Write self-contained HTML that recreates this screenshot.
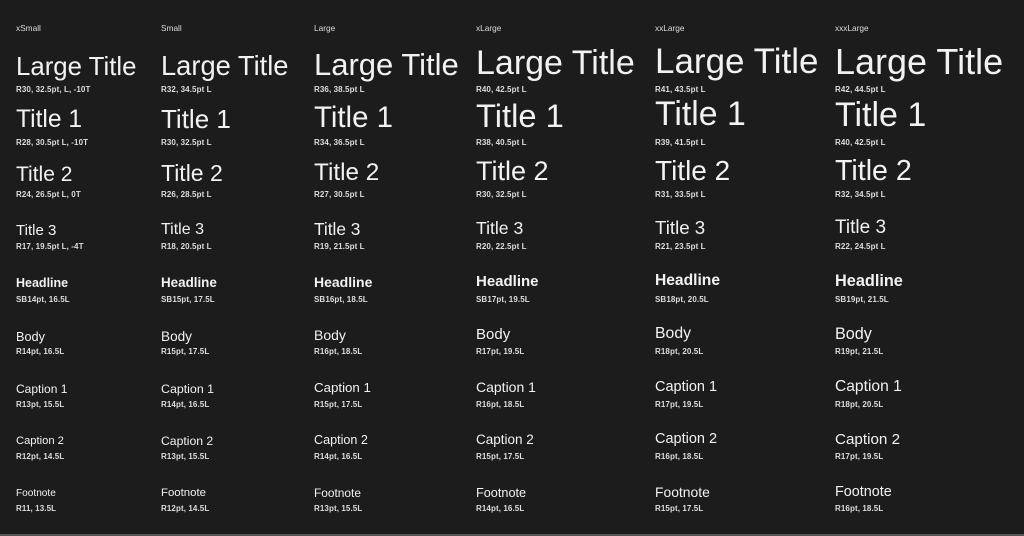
<!DOCTYPE html>
<html><head><meta charset="utf-8"><style>
html,body{margin:0;padding:0}
body{width:1024px;height:536px;background:#1c1c1c;position:relative;overflow:hidden;font-family:"Liberation Sans",sans-serif;color:#f2f2f2}
.c{position:absolute;top:0;height:536px;width:170px}
.c div{position:absolute;left:0;line-height:1;white-space:nowrap}
.h{font-size:8.3px;color:#ddd;top:24px}
.l{font-size:8px;font-weight:bold;color:#ddd;letter-spacing:0.1px;margin-top:1px}
.b{font-weight:bold}
.bot{position:absolute;left:0;right:0;bottom:0;height:2px;background:#555}
</style></head><body>

<div class="c" style="left:16px">
<div class="h">xSmall</div>
<div style="font-size:25.8px;top:55px">Large Title</div><div class="l" style="top:85px">R30, 32.5pt, L, -10T</div>
<div style="font-size:24.6px;top:108px">Title 1</div><div class="l" style="top:138px">R28, 30.5pt L, -10T</div>
<div style="font-size:21px;top:164px">Title 2</div><div class="l" style="top:190px">R24, 26.5pt L, 0T</div>
<div style="font-size:15px;top:223px">Title 3</div><div class="l" style="top:242px">R17, 19.5pt L, -4T</div>
<div class="b" style="font-size:12.5px;top:277px">Headline</div><div class="l" style="top:295px">SB14pt, 16.5L</div>
<div style="font-size:12.7px;top:331px">Body</div><div class="l" style="top:347px">R14pt, 16.5L</div>
<div style="font-size:12px;top:383px">Caption 1</div><div class="l" style="top:400px">R13pt, 15.5L</div>
<div style="font-size:11.2px;top:436px">Caption 2</div><div class="l" style="top:452px">R12pt, 14.5L</div>
<div style="font-size:10.1px;top:489px">Footnote</div><div class="l" style="top:504px">R11, 13.5L</div>
</div>

<div class="c" style="left:161px">
<div class="h">Small</div>
<div style="font-size:27.3px;top:52px">Large Title</div><div class="l" style="top:85px">R32, 34.5pt L</div>
<div style="font-size:26px;top:106px">Title 1</div><div class="l" style="top:138px">R30, 32.5pt L</div>
<div style="font-size:23px;top:162px">Title 2</div><div class="l" style="top:190px">R26, 28.5pt L</div>
<div style="font-size:16px;top:222px">Title 3</div><div class="l" style="top:242px">R18, 20.5pt L</div>
<div class="b" style="font-size:13.4px;top:276px">Headline</div><div class="l" style="top:295px">SB15pt, 17.5L</div>
<div style="font-size:13.6px;top:330px">Body</div><div class="l" style="top:347px">R15pt, 17.5L</div>
<div style="font-size:12.4px;top:383px">Caption 1</div><div class="l" style="top:400px">R14pt, 16.5L</div>
<div style="font-size:12.2px;top:435px">Caption 2</div><div class="l" style="top:452px">R13pt, 15.5L</div>
<div style="font-size:11.4px;top:488px">Footnote</div><div class="l" style="top:504px">R12pt, 14.5L</div>
</div>

<div class="c" style="left:314px">
<div class="h">Large</div>
<div style="font-size:31px;top:49px">Large Title</div><div class="l" style="top:85px">R36, 38.5pt L</div>
<div style="font-size:29.4px;top:103px">Title 1</div><div class="l" style="top:138px">R34, 36.5pt L</div>
<div style="font-size:24.3px;top:161px">Title 2</div><div class="l" style="top:190px">R27, 30.5pt L</div>
<div style="font-size:17.3px;top:221px">Title 3</div><div class="l" style="top:242px">R19, 21.5pt L</div>
<div class="b" style="font-size:14px;top:275px">Headline</div><div class="l" style="top:295px">SB16pt, 18.5L</div>
<div style="font-size:14px;top:328px">Body</div><div class="l" style="top:347px">R16pt, 18.5L</div>
<div style="font-size:13.3px;top:381px">Caption 1</div><div class="l" style="top:400px">R15pt, 17.5L</div>
<div style="font-size:12.6px;top:434px">Caption 2</div><div class="l" style="top:452px">R14pt, 16.5L</div>
<div style="font-size:11.9px;top:488px">Footnote</div><div class="l" style="top:504px">R13pt, 15.5L</div>
</div>

<div class="c" style="left:476px">
<div class="h">xLarge</div>
<div style="font-size:34px;top:46px">Large Title</div><div class="l" style="top:85px">R40, 42.5pt L</div>
<div style="font-size:32.7px;top:100px">Title 1</div><div class="l" style="top:138px">R38, 40.5pt L</div>
<div style="font-size:27px;top:158px">Title 2</div><div class="l" style="top:190px">R30, 32.5pt L</div>
<div style="font-size:17.6px;top:220px">Title 3</div><div class="l" style="top:242px">R20, 22.5pt L</div>
<div class="b" style="font-size:15px;top:274px">Headline</div><div class="l" style="top:295px">SB17pt, 19.5L</div>
<div style="font-size:15px;top:327px">Body</div><div class="l" style="top:347px">R17pt, 19.5L</div>
<div style="font-size:14px;top:380px">Caption 1</div><div class="l" style="top:400px">R16pt, 18.5L</div>
<div style="font-size:13.5px;top:433px">Caption 2</div><div class="l" style="top:452px">R15pt, 17.5L</div>
<div style="font-size:12.7px;top:487px">Footnote</div><div class="l" style="top:504px">R14pt, 16.5L</div>
</div>

<div class="c" style="left:655px">
<div class="h">xxLarge</div>
<div style="font-size:35px;top:44px">Large Title</div><div class="l" style="top:85px">R41, 43.5pt L</div>
<div style="font-size:33.8px;top:98px">Title 1</div><div class="l" style="top:138px">R39, 41.5pt L</div>
<div style="font-size:28px;top:157px">Title 2</div><div class="l" style="top:190px">R31, 33.5pt L</div>
<div style="font-size:18.7px;top:219px">Title 3</div><div class="l" style="top:242px">R21, 23.5pt L</div>
<div class="b" style="font-size:15.6px;top:273px">Headline</div><div class="l" style="top:295px">SB18pt, 20.5L</div>
<div style="font-size:15.8px;top:326px">Body</div><div class="l" style="top:347px">R18pt, 20.5L</div>
<div style="font-size:14.5px;top:380px">Caption 1</div><div class="l" style="top:400px">R17pt, 19.5L</div>
<div style="font-size:14.5px;top:432px">Caption 2</div><div class="l" style="top:452px">R16pt, 18.5L</div>
<div style="font-size:13.9px;top:486px">Footnote</div><div class="l" style="top:504px">R15pt, 17.5L</div>
</div>

<div class="c" style="left:835px">
<div class="h">xxxLarge</div>
<div style="font-size:36px;top:44px">Large Title</div><div class="l" style="top:85px">R42, 44.5pt L</div>
<div style="font-size:34px;top:98px">Title 1</div><div class="l" style="top:138px">R40, 42.5pt L</div>
<div style="font-size:28.6px;top:157px">Title 2</div><div class="l" style="top:190px">R32, 34.5pt L</div>
<div style="font-size:19px;top:218px">Title 3</div><div class="l" style="top:242px">R22, 24.5pt L</div>
<div class="b" style="font-size:16.3px;top:273px">Headline</div><div class="l" style="top:295px">SB19pt, 21.5L</div>
<div style="font-size:16.2px;top:326px">Body</div><div class="l" style="top:347px">R19pt, 21.5L</div>
<div style="font-size:15.6px;top:379px">Caption 1</div><div class="l" style="top:400px">R18pt, 20.5L</div>
<div style="font-size:15.2px;top:432px">Caption 2</div><div class="l" style="top:452px">R17pt, 19.5L</div>
<div style="font-size:14.4px;top:485px">Footnote</div><div class="l" style="top:504px">R16pt, 18.5L</div>
</div>

<div class="bot"></div>
</body></html>
